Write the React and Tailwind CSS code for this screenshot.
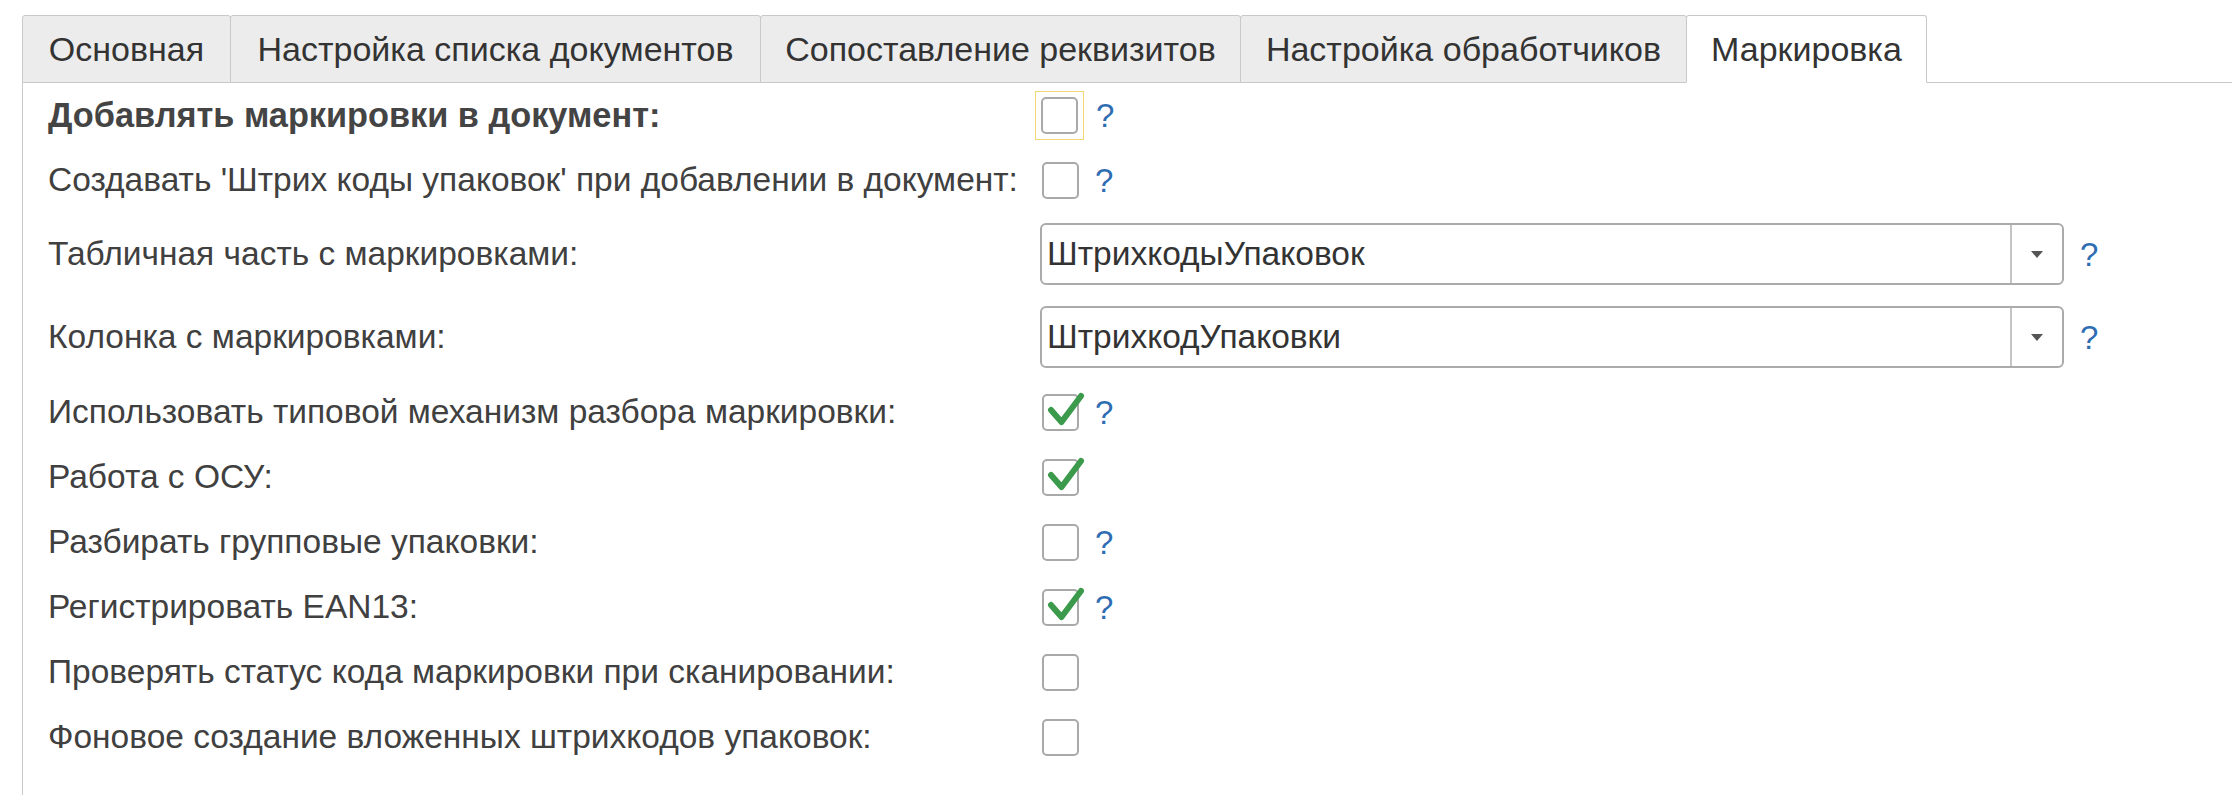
const tabs = [
  { label: 'Основная', width: 'w-[209px]' },
  { label: 'Настройка списка документов', width: 'w-[531px]' },
  { label: 'Сопоставление реквизитов', width: 'w-[481px]' },
  { label: 'Настройка обработчиков', width: 'w-[447px]' },
  { label: 'Маркировка', width: 'w-[241px]', active: true },
];

function Help({ className = 'ml-[16px]' }) {
  return <span className={`text-[33px] leading-none text-[#2f6db3] ${className}`}>?</span>;
}

function Checkbox({ checked = false, focused = false }) {
  const box = (
    <span className="relative block h-[37px] w-[37px] rounded-[5px] border-2 border-[#a9a9a9] bg-white">
      {checked ? (
        <svg
          className="absolute left-[-2px] top-[-2px] overflow-visible"
          width="41"
          height="41"
          viewBox="0 0 41 41"
        >
          <path
            d="M9 16 L19.5 28 L39 2"
            fill="none"
            stroke="#3b9a4b"
            strokeWidth="6"
            strokeLinecap="round"
            strokeLinejoin="round"
          />
        </svg>
      ) : null}
    </span>
  );

  if (focused) {
    return (
      <span className="-my-[6px] -ml-[5px] block border border-[#f2d67a] px-[5px] py-[5px]">{box}</span>
    );
  }
  return <span className="ml-[2px] block">{box}</span>;
}

function Select({ value }) {
  return (
    <div className="flex h-[62px] w-[1024px] items-stretch rounded-[6px] border-2 border-[#ababab] bg-white">
      <div className="flex flex-1 items-center pl-[5px] text-[33.5px] text-[#333]">{value}</div>
      <div className="flex w-[52px] items-center justify-center border-l-2 border-[#c4c4c4]">
        <span className="h-0 w-0 border-x-[6px] border-t-[7px] border-x-transparent border-t-[#555]" />
      </div>
    </div>
  );
}

function Row({ label, bold = false, children, className = 'h-[65px]' }) {
  return (
    <div className={`flex items-center ${className}`}>
      <div
        className={`w-[1017px] shrink-0 whitespace-nowrap pl-[25px] ${
          bold ? 'text-[34.3px] font-bold text-[#444]' : 'text-[33.5px] text-[#404040]'
        }`}
      >
        {label}
      </div>
      <div className="flex items-center">{children}</div>
    </div>
  );
}

export default function App() {
  return (
    <div
      className="h-[796px] w-[2232px] bg-white"
      style={{ fontFamily: '"Liberation Sans", Arial, sans-serif' }}
    >
      <div className="flex pl-[22px] pt-[15px]">
        {tabs.map((tab, i) => (
          <div
            key={tab.label}
            className={`flex h-[68px] shrink-0 items-center justify-center whitespace-nowrap rounded-t-[3px] border border-[#c9c9c9] text-[34px] text-[#333] ${
              tab.width
            } ${i > 0 ? '-ml-px' : ''} ${
              tab.active ? 'border-b-white bg-white' : 'bg-[#ececec]'
            }`}
          >
            {tab.label}
          </div>
        ))}
        <div className="flex-1 border-b border-[#c9c9c9]" />
      </div>

      <div className="ml-[22px] h-[712px] border-l border-[#c9c9c9]">
        <Row label="Добавлять маркировки в документ:" bold>
          <Checkbox focused />
          <Help className="ml-[12px]" />
        </Row>
        <Row label="Создавать 'Штрих коды упаковок' при добавлении в документ:">
          <Checkbox />
          <Help />
        </Row>
        <Row label="Табличная часть с маркировками:" className="mt-[10px] h-[62px]">
          <Select value="ШтрихкодыУпаковок" />
          <Help />
        </Row>
        <Row label="Колонка с маркировками:" className="mt-[21px] h-[62px]">
          <Select value="ШтрихкодУпаковки" />
          <Help />
        </Row>
        <Row label="Использовать типовой механизм разбора маркировки:" className="mt-[12px] h-[65px]">
          <Checkbox checked />
          <Help />
        </Row>
        <Row label="Работа с ОСУ:">
          <Checkbox checked />
        </Row>
        <Row label="Разбирать групповые упаковки:">
          <Checkbox />
          <Help />
        </Row>
        <Row label="Регистрировать EAN13:">
          <Checkbox checked />
          <Help />
        </Row>
        <Row label="Проверять статус кода маркировки при сканировании:">
          <Checkbox />
        </Row>
        <Row label="Фоновое создание вложенных штрихкодов упаковок:">
          <Checkbox />
        </Row>
      </div>
    </div>
  );
}
